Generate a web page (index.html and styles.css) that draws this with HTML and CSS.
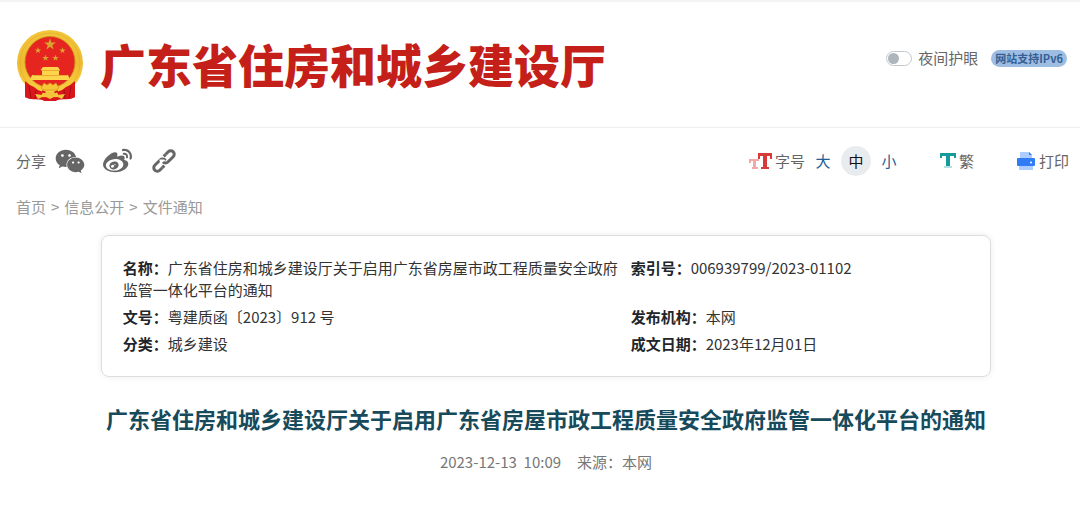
FILE: index.html
```html
<!DOCTYPE html>
<html lang="zh-CN">
<head>
    <meta charset="UTF-8">
    <meta name="viewport" content="width=device-width, initial-scale=1.0">
    <title>广东省住房和城乡建设厅</title>
    <link rel="stylesheet" href="styles.css">
</head>
<body>

    <header class="header">
        <a class="brand" href="#">
            <svg class="emblem" viewBox="0 0 68 72" aria-hidden="true">
                <defs>
                    <linearGradient id="gold" x1="0" y1="0" x2="0" y2="1">
                        <stop offset="0" stop-color="#f3c63c"/>
                        <stop offset="0.5" stop-color="#eebb30"/>
                        <stop offset="1" stop-color="#fbd044"/>
                    </linearGradient>
                    <polygon id="star" points="0,-10 2.25,-3.09 9.51,-3.09 3.63,1.18 5.88,8.09 0,3.82 -5.88,8.09 -3.63,1.18 -9.51,-3.09 -2.25,-3.09"/>
                </defs>
                <!-- ribbons -->
                <path d="M10 50L58 50L59 68Q54 71 48 70L34 72L20 70Q14 71 9 68Z" fill="#cf1519"/>
                <!-- wreath -->
                <circle cx="34" cy="34" r="33" fill="url(#gold)"/>
                <circle cx="34" cy="34" r="30" fill="none" stroke="#dfa92a" stroke-width=".6"/>
                <path d="M9 52Q13 56 18 58Q22 62 27 63L24 70Q16 71 9 68Z" fill="#d8161b"/>
                <path d="M59 52Q55 56 50 58Q46 62 41 63L44 70Q52 71 59 68Z" fill="#d8161b"/>
                <path d="M13 57L15 69M20 61L19 70M55 57L53 69M48 61L49 70" stroke="#a60f13" stroke-width="1"/>
                <ellipse cx="34" cy="33" rx="25" ry="25.5" fill="#e62520" stroke="#c78b1c" stroke-width=".8"/>
                <!-- stars -->
                <g fill="#dba431">
                    <use href="#star" transform="translate(34 15.5) scale(.62)"/>
                    <use href="#star" transform="translate(22 21.5) scale(.34)"/>
                    <use href="#star" transform="translate(46.5 21.5) scale(.34)"/>
                    <use href="#star" transform="translate(29.5 29) scale(.34)"/>
                    <use href="#star" transform="translate(39.5 29) scale(.34)"/>
                </g>
                <!-- gate -->
                <path d="M27 38H42L44 41H24.5ZM26 41H43V46H52L54 51H14L16 46H26Z" fill="#ffd34a"/>
                <path d="M25 41.5H44M17 46.500H51" stroke="#dc9c28" stroke-width=".7"/>
                <!-- cog and knots -->
                <path d="M28 54L31 56L34 54L37 56L40 54L43 59L40 61H28L25 59Z" fill="#f6c637" stroke="#d48e1c" stroke-width=".7"/>
                <path d="M26 62Q34 67 42 62" fill="none" stroke="#cf1519" stroke-width="2"/>
                <path d="M19 65L27 66L30 63H38L41 66L49 65L46 70L41 68L37 70H31L27 68L22 70Z" fill="#f4c43a"/>
                <path d="M24 69L30 68L34 70L38 68L44 69L40 72H28Z" fill="#d8161b"/>
            </svg>
            <span class="site-name">广东省住房和城乡建设厅</span>
        </a>
        <div class="header-tools">
            <label class="night"><input class="switch" type="checkbox">夜间护眼</label>
            <a class="ipv6" href="#">网站支持IPv6</a>
        </div>
    </header>

    <div class="toolbar">
        <div class="share">
            <span>分享</span>
            <button class="icon-btn" type="button" aria-label="微信">
                <svg width="30" height="27" viewBox="0 0 576 512"><path d="M385.2 167.6c6.4 0 12.6.3 18.8 1.1C387.4 90.3 303.3 32 207.7 32 100.5 32 13 104.8 13 197.4c0 53.4 29.3 97.5 77.9 131.6l-19.3 58.6 68-34.1c24.4 4.8 43.8 9.7 68.2 9.7 6.2 0 12.1-.3 18.3-.8-4-12.9-6.2-26.6-6.2-40.8-.1-84.9 72.9-154 165.3-154zm-104.5-52.9c14.5 0 24.2 9.7 24.2 24.4 0 14.5-9.7 24.2-24.2 24.2-14.8 0-29.3-9.7-29.3-24.2.1-14.7 14.6-24.4 29.3-24.4zm-136.4 48.6c-14.5 0-29.3-9.7-29.3-24.2 0-14.8 14.8-24.4 29.3-24.4 14.8 0 24.4 9.7 24.4 24.4 0 14.6-9.6 24.2-24.4 24.2zM563 319.4c0-77.9-77.9-141.3-165.4-141.3-92.7 0-165.4 63.4-165.4 141.3S305 460.7 397.6 460.7c19.3 0 38.9-5.1 58.6-9.9l53.4 29.3-14.8-48.6C534 402.1 563 363.2 563 319.4zm-219.1-24.5c-9.7 0-19.3-9.7-19.3-19.6 0-9.7 9.7-19.3 19.3-19.3 14.8 0 24.4 9.7 24.4 19.3 0 10-9.7 19.6-24.4 19.6zm107.1 0c-9.7 0-19.3-9.7-19.3-19.6 0-9.7 9.7-19.3 19.3-19.3 14.5 0 24.4 9.7 24.4 19.3.1 10-9.9 19.6-24.4 19.6z"/></svg>
            </button>
            <button class="icon-btn" type="button" aria-label="微博">
                <svg width="29" height="29" viewBox="0 0 512 512"><path d="M407 177.6c7.6-24-13.4-46.8-37.4-41.7-22 4.8-28.8-28.1-7.1-32.8 50.1-10.9 92.3 37.1 76.5 84.8-6.8 21.2-38.8 10.8-32-10.3zM214.8 446.7C108.5 446.7 0 395.3 0 310.4c0-44.3 28-95.4 76.3-143.7C176 67 279.5 65.8 249.9 161c-4 13.1 12.3 5.7 12.3 6 79.5-33.6 140.5-16.8 114 51.4-3.7 9.4 1.1 10.9 8.3 13.1 135.7 42.3 34.8 215.2-169.7 215.2zm143.7-146.3c-5.4-55.7-78.5-94-163.4-85.7-84.8 8.6-148.8 60.3-143.4 116s78.5 94 163.4 85.7c84.8-8.6 148.8-60.3 143.4-116zM347.9 35.1c-25.9 5.6-16.8 43.7 8.3 38.3 72.3-15.2 134.8 52.8 111.7 124-7.4 24.2 29.1 37 37.4 12 31.9-99.8-55.1-195.9-157.4-174.3zm-78.5 311c-17.1 38.8-66.8 60-109.1 46.3-40.8-13.1-58-53.4-40.3-89.7 17.7-35.4 63.1-55.4 103.4-45.1 42 10.8 63.1 50.2 46 88.5zm-86.3-30c-12.9-5.4-30 .3-38 12.9-8.3 12.9-4.3 28 8.6 34 13.1 6 30.8.3 39.1-12.9 8-13.1 3.7-28.3-9.7-34zm32.6-13.4c-5.1-1.7-11.4.6-14.3 5.4-2.9 5.1-1.4 10.6 3.7 12.9 5.1 2 11.7-.3 14.6-5.4 2.8-5.2 1.1-10.9-4-12.9z"/></svg>
            </button>
            <button class="icon-btn" type="button" aria-label="复制链接">
                <svg class="link-icon" width="24" height="24" viewBox="0 0 24 24">
                    <g transform="rotate(-45 12 12)">
                        <path d="M6 15.5H2.5A3.500 3.500 0 0 1 2.500 8.500H10A3.500 3.500 0 0 1 13.500 12Q13.500 13.500 12.500 14.500"/>
                        <path d="M18 8.500H21.500A3.500 3.500 0 0 1 21.500 15.500H14A3.500 3.500 0 0 1 10.500 12Q10.500 10.500 11.500 9.500" class="link-gap"/>
                        <path d="M18 8.500H21.500A3.500 3.500 0 0 1 21.500 15.500H14A3.500 3.500 0 0 1 10.500 12"/>
                        <path d="M6 15.500H9M15 8.500H18"/>
                    </g>
                </svg>
            </button>
        </div>
        <div class="page-tools">
            <div class="font-size">
                <svg width="23" height="18" viewBox="0 0 23 18" aria-hidden="true">
                    <g fill="#f0a9a7">
                        <rect x="0" y="7" width="10" height="2"/>
                        <rect x="0" y="7" width="2" height="4"/>
                        <rect x="4" y="7" width="3" height="10"/>
                        <rect x="3" y="15" width="6" height="2"/>
                    </g>
                    <g fill="#d93a37">
                        <rect x="9" y="1" width="14" height="3"/>
                        <rect x="9" y="1" width="2" height="6"/>
                        <rect x="21" y="1" width="2" height="6"/>
                        <rect x="14" y="1" width="4" height="16"/>
                        <rect x="12" y="15" width="8" height="2"/>
                    </g>
                </svg>
                <span class="tool-name">字号</span>
                <button class="size-btn" type="button">大</button>
                <button class="size-btn active" type="button">中</button>
                <button class="size-btn" type="button">小</button>
            </div>
            <a class="tool" href="#">
                <svg width="17" height="18" viewBox="0 0 17 18" aria-hidden="true">
                    <g fill="#169a9c">
                        <rect x="1" y="1" width="16" height="3"/>
                        <rect x="1" y="1" width="2" height="5"/>
                        <rect x="15" y="1" width="2" height="5"/>
                        <rect x="7" y="1" width="4" height="13"/>
                    </g>
                    <rect x="5" y="14" width="8" height="2" fill="#b5dfe0"/>
                </svg>
                繁
            </a>
            <a class="tool" href="#">
                <svg width="20" height="20" viewBox="0 0 20 20" aria-hidden="true">
                    <path d="M4 1H13L16 4V9H4ZM3 14H17V19H3Z" fill="#adccff"/>
                    <path d="M13 1L16 4H13Z" fill="#2f7cf6"/>
                    <path d="M2 7H18Q19 7 19 8V14Q19 15 18 15H2Q1 15 1 14V8Q1 7 2 7Z" fill="#2f7cf6"/>
                    <circle cx="15" cy="11.5" r="1" fill="#fff"/>
                </svg>
                打印
            </a>
        </div>
    </div>

    <nav class="breadcrumb">
        <a href="#">首页</a>
        <span>&gt;</span>
        <a href="#">信息公开</a>
        <span>&gt;</span>
        <a href="#">文件通知</a>
    </nav>

    <main class="content">
        <dl class="info-card">
            <div>
                <dt>名称：</dt><dd>广东省住房和城乡建设厅关于启用广东省房屋市政工程质量安全政府监管一体化平台的通知</dd>
            </div>
            <div>
                <dt>索引号：</dt><dd>006939799/2023-01102</dd>
            </div>
            <div>
                <dt>文号：</dt><dd>粤建质函〔2023〕912 号</dd>
            </div>
            <div>
                <dt>发布机构：</dt><dd>本网</dd>
            </div>
            <div>
                <dt>分类：</dt><dd>城乡建设</dd>
            </div>
            <div>
                <dt>成文日期：</dt><dd>2023年12月01日</dd>
            </div>
        </dl>

        <h1>广东省住房和城乡建设厅关于启用广东省房屋市政工程质量安全政府监管一体化平台的通知</h1>
        <p class="meta"><time>2023-12-13&nbsp; 10:09</time><span>来源：本网</span></p>
    </main>

</body>
</html>
```
FILE: styles.css
```css
/* Global Styles */
* {
    box-sizing: border-box;
}

body {
    font-family: 'Noto Sans CJK SC', sans-serif;
    font-size: 15px;
    line-height: 22px;
    background-color: #fff;
    color: #666;
    margin: 0;
    border-top: 2px solid #f3f3f3;
}

a {
    color: inherit;
    text-decoration: none;
}

button {
    font: inherit;
    color: inherit;
    background: none;
    border: none;
    padding: 0;
    cursor: pointer;
}

svg {
    display: block;
    flex-shrink: 0;
}

/* Header */
.header {
    display: flex;
    justify-content: space-between;
    align-items: flex-start;
    padding: 27px 13px 26px 16px;
    border-bottom: 1px solid #eee;
}

.brand {
    display: flex;
    align-items: flex-start;
    gap: 16px;
}

.emblem {
    width: 68px;
    height: 72px;
}

.site-name {
    color: #c41f18;
    font-size: 46px;
    font-weight: 900;
    line-height: 68px;
    white-space: nowrap;
}

.header-tools {
    display: flex;
    align-items: center;
    gap: 13px;
    padding-top: 18px;
}

.night {
    display: flex;
    align-items: center;
    gap: 6px;
}

.switch {
    appearance: none;
    display: flex;
    width: 26px;
    height: 15px;
    margin: 0;
    padding: 1px;
    border: 1px solid #c3c8cd;
    border-radius: 8px;
    cursor: pointer;
}

.switch::before {
    content: "";
    width: 11px;
    height: 11px;
    border-radius: 50%;
    background-color: #adb5bd;
}

.switch:checked {
    justify-content: flex-end;
}

.ipv6 {
    padding: 0 4px;
    border-radius: 9px;
    background-color: #9dbde2;
    color: #355f93;
    font-size: 11px;
    font-weight: bold;
    line-height: 17px;
}

/* Toolbar */
.toolbar {
    display: flex;
    justify-content: space-between;
    align-items: center;
    padding: 16px 11px 0 16px;
    min-height: 50px;
}

.share,
.page-tools,
.font-size,
.tool {
    display: flex;
    align-items: center;
}

.share {
    gap: 18px;
}

.share span {
    margin-right: -9px;
}

.icon-btn svg {
    fill: #666;
}

.icon-btn .link-icon {
    margin-left: 2px;
    fill: none;
    stroke: #666;
    stroke-width: 3;
}

.link-icon .link-gap {
    stroke: #fff;
    stroke-width: 5;
}

.page-tools {
    gap: 35px;
}

.font-size {
    gap: 3px;
}

.size-btn {
    width: 30px;
    height: 30px;
    border-radius: 50%;
    color: #1f5d93;
}

.size-btn.active {
    background-color: #e9ecef;
    color: #111;
}

.tool {
    gap: 3px;
}

.tool + .tool {
    margin-left: 7px;
}

/* Breadcrumb */
.breadcrumb {
    display: flex;
    gap: 5px;
    padding: 18px 16px 0;
    color: #999;
}

/* Content */
.content {
    padding: 17px 4px 0 16px;
}

.info-card {
    display: grid;
    grid-template-columns: 60% 40%;
    row-gap: 5px;
    width: 84%;
    margin: 0 auto;
    padding: 21px;
    border: 1px solid #ddd;
    border-radius: 8px;
    box-shadow: 0 0 6px rgba(0, 0, 0, 0.08);
    color: #333;
}

.info-card dt,
.info-card dd {
    display: inline;
    margin: 0;
}

.info-card dt {
    color: #212529;
    font-weight: bold;
}

h1 {
    margin: 25px 0 0;
    color: #174a5b;
    font-size: 22px;
    font-weight: bold;
    line-height: 32px;
    text-align: center;
}

.meta {
    display: flex;
    justify-content: center;
    gap: 16px;
    margin: 17px 0 0;
    color: #777;
}
```
